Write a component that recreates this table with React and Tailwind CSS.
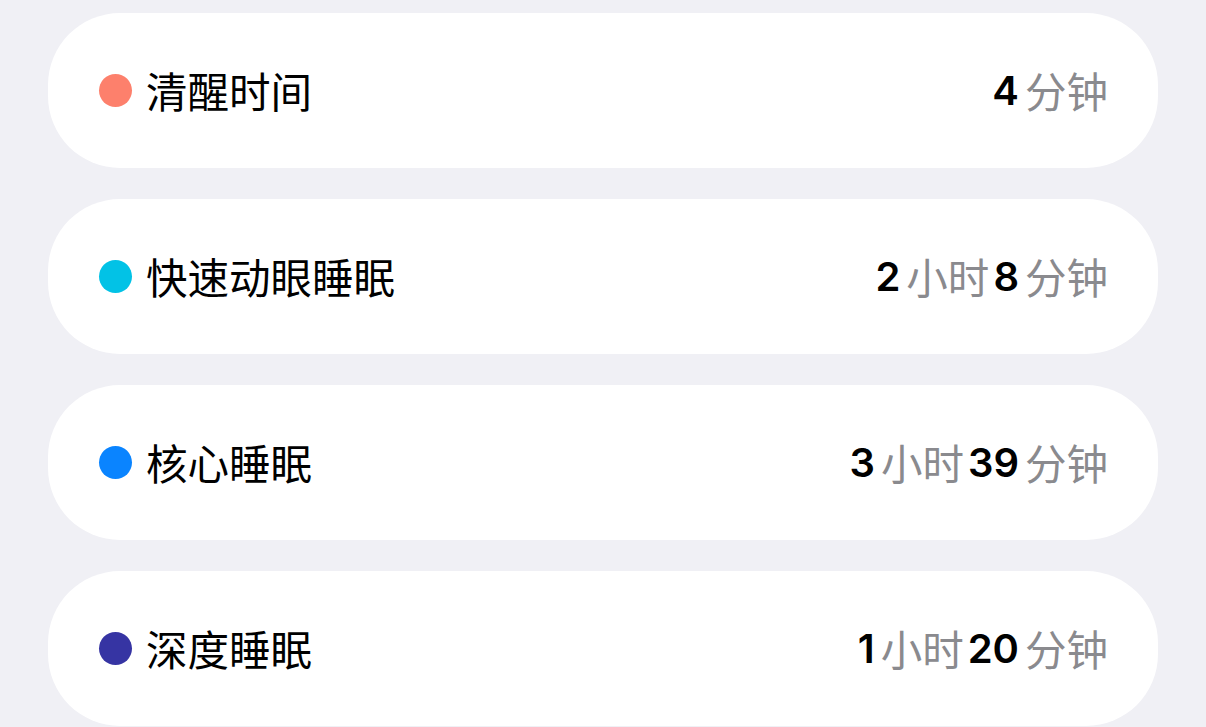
import React from "react";

const stages = [
  { label: "清醒时间", color: "bg-[#fd806c]", parts: [["4", "分钟"]] },
  { label: "快速动眼睡眠", color: "bg-[#02c2e6]", parts: [["2", "小时"], ["8", "分钟"]] },
  { label: "核心睡眠", color: "bg-[#0a84ff]", parts: [["3", "小时"], ["39", "分钟"]] },
  { label: "深度睡眠", color: "bg-[#3634a3]", parts: [["1", "小时"], ["20", "分钟"]] },
];

const App = () => {
  return (
    <div
      className="min-h-screen bg-[#f0f0f5] px-[48px] pt-[13px] flex flex-col gap-[31px]"
      style={{ fontFamily: '"Noto Sans CJK SC", "Noto Sans", sans-serif' }}
    >
      {stages.map((stage) => (
        <div
          key={stage.label}
          className="h-[155px] bg-white rounded-[72px] flex items-center justify-between pl-[51px] pr-[50px]"
        >
          {/* Label */}
          <div className="flex items-center">
            <span className={`w-[33px] h-[33px] rounded-full ${stage.color}`}></span>
            <span className="ml-[14px] text-[41.5px] leading-none text-black">
              {stage.label}
            </span>
          </div>

          {/* Duration */}
          <div className="flex items-center text-[41.5px] leading-none">
            {stage.parts.map(([num, unit], i) => (
              <div key={i} className={`flex items-center ${i > 0 ? "ml-[4px]" : ""}`}>
                <span
                  className="font-semibold text-black text-[40px]"
                  style={{ fontFamily: 'Inter, "Noto Sans", sans-serif' }}
                >
                  {num}
                </span>
                <span className="ml-[6px] text-[#8a8a8e]">{unit}</span>
              </div>
            ))}
          </div>
        </div>
      ))}
    </div>
  );
};

export default App;
